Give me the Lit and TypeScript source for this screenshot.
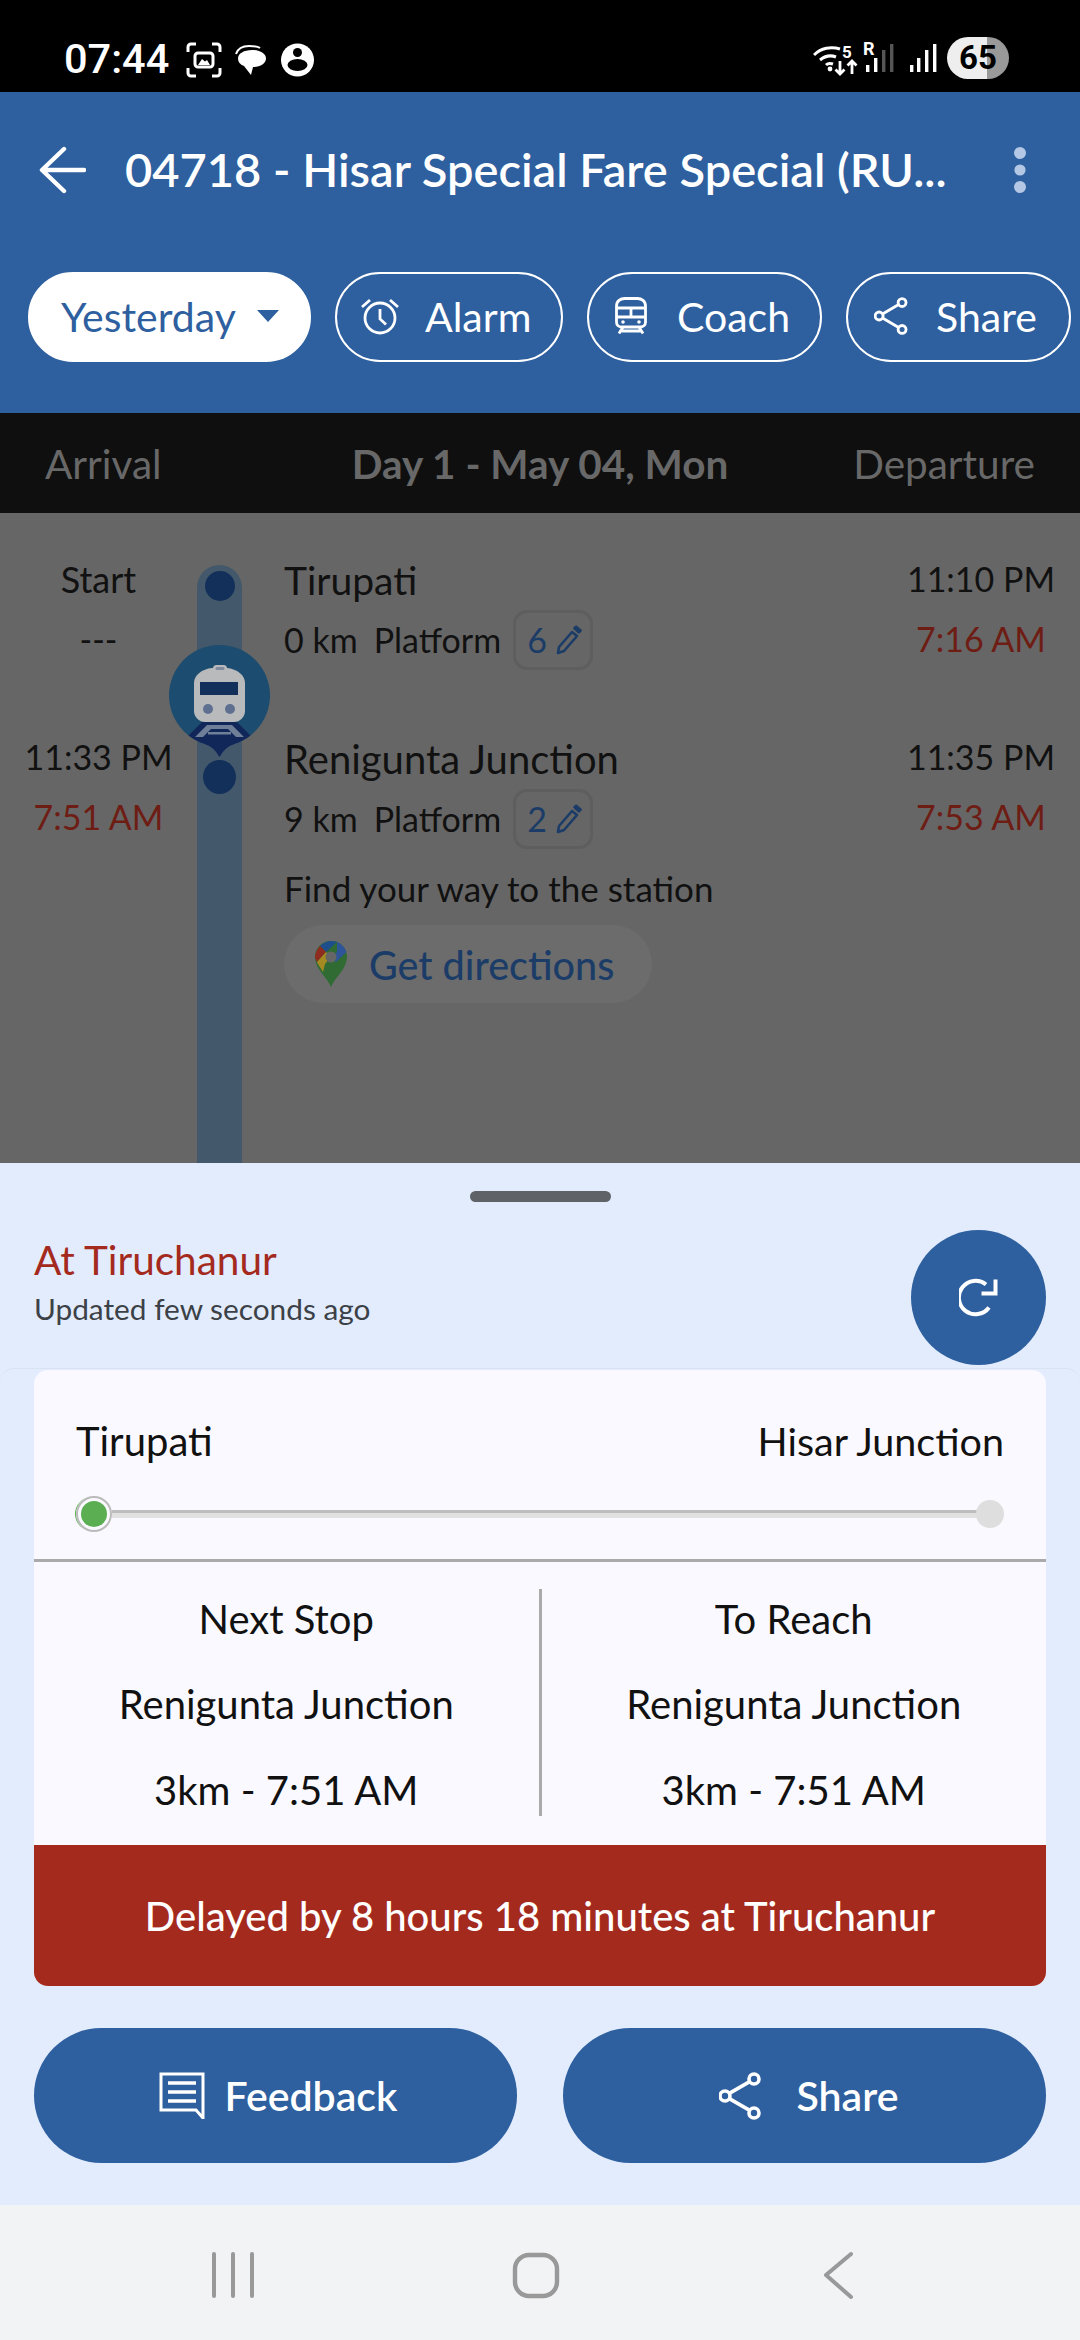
import { LitElement, html, css } from "lit";
import { customElement } from "lit/decorators.js";

const shareIcon = (w: number, h: number) => html`<svg width=${w} height=${h} viewBox="0 0 42 48" fill="none" stroke="currentColor" stroke-width="3.6">
  <circle cx="35" cy="7" r="5"/><circle cx="6" cy="24" r="5"/><circle cx="35" cy="41" r="5"/>
  <path d="M30.7 9.6 10.3 21.4M10.3 26.6l20.4 11.8"/></svg>`;

const pencil = html`<svg class="pen" width="26" height="30" viewBox="0 0 26 30" fill="none" stroke="#1C3C68" stroke-width="2.6" stroke-linejoin="round">
  <path d="M3 22 16 7l5 4L8 26l-6 2z"/><path d="M18.5 3.2l1.6-1.4 4.4 3.8-1.6 1.7z" fill="#1C3C68"/></svg>`;

@customElement("app-root")
export class AppRoot extends LitElement {
  static styles = css`
    :host { display: block; width: 1080px; height: 2340px; overflow: hidden; font-family: "Lato", "Noto Sans", sans-serif; color: #111; }
    * { box-sizing: border-box; }
    .status { height: 92px; background: #000; color: #fff; display: flex; align-items: center; justify-content: space-between; padding: 24px 71px 0 64px; }
    .status-left, .status-right { display: flex; align-items: center; }
    .clock { font: 500 41.5px "Roboto", sans-serif; width: 122px; }
    .status-left svg { margin: 4px 13px 0 0; }
    .batt { width: 62px; height: 42px; border-radius: 21px; background: linear-gradient(90deg, #eee 0 40px, #999 40px); color: #000; font: 700 33px/42px "Roboto", sans-serif; text-align: center; margin-left: 8px; }
    .header { height: 321px; background: #2E5F9F; color: #fff; }
    .toolbar { height: 156px; display: flex; align-items: center; padding-left: 38px; }
    .title { font-size: 47px; font-weight: 600; margin-left: 39px; white-space: nowrap; flex: 0 0 823px; margin-top: -3px; }
    .kebab { margin-left: 65px; }
    .chips { margin-top: 24px; display: flex; padding-left: 28px; }
    .chip { height: 90px; padding-bottom: 2px; border-radius: 45px; border: 2.5px solid #fff; display: flex; align-items: center; font-size: 41px; flex: none; white-space: nowrap; }
    .chip.sel { width: 283px; background: #fff; color: #2E5F9F; padding-left: 31px; margin-right: 24px; }
    .chip.sel svg { margin-left: 21px; }
    .chip.alarm { width: 228px; padding-left: 24px; margin-right: 24px; }
    .chip.alarm svg { margin-right: 26px; }
    .chip.coach { width: 235px; padding-left: 26px; margin-right: 24px; }
    .chip.coach svg { margin-right: 30px; }
    .chip.share { width: 225px; padding-left: 26px; }
    .chip.share svg { margin-right: 28px; }
    .daybar { height: 100px; background: #0F0F0F; color: #686868; display: grid; grid-template-columns: 1fr auto 1fr; align-items: center; padding: 0 45px; font-size: 40.5px; }
    .daybar .day { font-weight: 700; }
    .daybar .dep { text-align: right; }
    .timeline { height: 650px; background: #666; padding-top: 36px; overflow: hidden; font-size: 34px; }
    .row { display: grid; grid-template-columns: 197px 45px 1fr auto; }
    .row.first { height: 178px; }
    .row.second { height: 436px; }
    .times { text-align: center; line-height: 60px; }
    .times .word { font-size: 36px; }
    .times.right { margin-right: 25px; }
    .late { color: #6E1D14; }
    .track { background: #43586A; position: relative; }
    .row.first .track { margin-top: 16px; border-radius: 23px 23px 0 0; padding-top: 6px; }
    .row.second .track { padding-top: 33px; }
    .dot { display: block; margin: 0 auto; border-radius: 50%; background: #12305A; }
    .row.first .dot { width: 30px; height: 30px; }
    .row.second .dot { width: 33px; height: 34px; }
    .marker { position: absolute; left: -28px; top: 80px; z-index: 1; }
    .main { padding: 1px 0 0 42px; }
    .name { font-size: 39px; line-height: 60px; }
    .name.long { font-size: 40px; line-height: 62px; margin-bottom: -1px; }
    .line { display: flex; align-items: center; height: 60px; line-height: 60px; }
    .km { margin-right: 16px; }
    .badge { width: 80px; height: 60px; border: 3px solid #5E5E5E; border-radius: 14px; margin-left: 12px; display: flex; align-items: center; padding-left: 11px; color: #1C3C68; }
    .badge .pen { margin-left: 9px; }
    .find { font-size: 35px; line-height: 60px; margin-top: 9px; }
    .pill { margin-top: 7px; width: 368px; height: 78px; border-radius: 39px; background: #6C6C6C; display: flex; align-items: center; padding-left: 31px; color: #1C3C68; font-size: 39.5px; font-weight: 500; }
    .pill svg { margin-right: 22px; }
    .sheet { height: 1042px; background: #E2ECFD; display: flex; flex-direction: column; }
    .handle { width: 141px; height: 11px; border-radius: 6px; background: #5F6368; margin: 28px auto 0; flex: none; }
    .head { margin-top: 28px; height: 135px; padding: 5px 34px 0; display: flex; align-items: flex-start; justify-content: space-between; flex: none; }
    .at { color: #A52A1E; font-size: 40.5px; line-height: 50px; }
    .upd { color: #3C4147; font-size: 29.8px; line-height: 40px; margin-top: 4px; }
    .refresh { width: 135px; height: 135px; margin-top: -5px; border-radius: 50%; background: #2E5F9F; display: flex; align-items: center; justify-content: center; }
    .wrap { margin-top: 3px; padding: 1px 34px 0; border-top: 1px solid #D9E3F4; border-radius: 14px; flex: none; }
    .card { height: 616px; background: #FAF9FF; border-radius: 14px; overflow: hidden; display: flex; flex-direction: column; font-size: 40px; }
    .ends { display: flex; justify-content: space-between; padding: 46px 42px 0 42px; line-height: 50px; flex: none; }
    .ends .to { font-size: 39.5px; }
    .slider { margin: 29px 42px 0 42px; height: 38px; display: flex; align-items: center; flex: none; }
    .startdot { width: 36px; height: 36px; border-radius: 50%; flex: none; background: #5BAE52; border: 5px solid #FAF9FF; outline: 2px solid #BBB; outline-offset: -2px; box-shadow: -2px 0 0 -1px #5BAE52; }
    .rail { flex: 1; height: 8px; background: #E1E1E1; border-top: 3px solid #BDBDBD; }
    .enddot { width: 28px; height: 28px; border-radius: 50%; background: #DEDEDE; flex: none; margin-left: -2px; }
    .divider { margin-top: 26px; height: 3px; background: #AAA; flex: none; }
    .cols { height: 283px; flex: none; display: grid; grid-template-columns: 1fr 3px 1fr; padding-top: 27px; }
    .col { text-align: center; padding-top: 1.5px; }
    .col div { height: 85.5px; line-height: 56px; white-space: nowrap; }
    .vline { background: #AAA; height: 227px; }
    .delay { height: 141px; flex: none; background: #A52A1E; color: #fff; display: flex; align-items: center; justify-content: center; font-size: 40px; font-weight: 500; white-space: nowrap; }
    .actions { margin-top: 42px; padding: 0 34px; display: grid; grid-template-columns: 1fr 1fr; gap: 46px; flex: none; }
    .btn { height: 135px; border-radius: 68px; background: #2E5F9F; color: #fff; display: flex; align-items: center; justify-content: center; font-size: 41px; font-weight: 600; padding-left: 5px; }
    .btn svg { margin-right: 20px; }
    .btn.s { padding-left: 8px; }
    .btn.s svg { margin-right: 36px; }
    .nav { height: 135px; background: #F2F3F5; display: grid; grid-template-columns: 1fr; }
  `;

  render() {
    return html`
      <div class="status">
        <div class="status-left">
          <span class="clock">07:44</span>
          <svg width="36" height="36" viewBox="0 0 36 36" fill="none" stroke="#fff" stroke-width="3">
            <path d="M2 10V5a3 3 0 0 1 3-3h5M26 2h5a3 3 0 0 1 3 3v5M34 26v5a3 3 0 0 1-3 3h-5M10 34H5a3 3 0 0 1-3-3v-5"/>
            <rect x="9" y="11" width="18" height="14" rx="3"/><path d="M12 23l4-6 3 2.500 2-1.500 3 5z" fill="#fff" stroke="none"/>
          </svg>
          <svg width="33" height="36" viewBox="0 0 33 36" fill="#fff">
            <path d="M17 8c8 0 14 3.500 14 8.500 0 5-6 8.500-13 8.500l-2 8-7-9c-4-1.500-6-4-6-7.500 0-5 6-8.500 14-8.500z"/><path d="M1 12C3 6 8 4 14 4c5 0 9 .5 11 2" stroke="#fff" stroke-width="2" fill="none"/>
          </svg>
          <svg width="33" height="36" viewBox="0 0 33 36">
            <circle cx="16.500" cy="18" r="16.500" fill="#fff"/><circle cx="16.500" cy="10.500" r="4.500" fill="#000"/><ellipse cx="16.500" cy="23" rx="10" ry="6" fill="#000"/>
          </svg>
        </div>
        <div class="status-right">
          <svg width="126" height="44" viewBox="0 -4 126 44" fill="none" stroke="#fff">
            <path d="M1 15C8 8 18 6 27 9M7 20c5-4 11-5 16-3M13 25c2-2 4-2 7-1" stroke-width="3"/>
            <circle cx="17" cy="29" r="2.400" fill="#fff" stroke="none"/>
            <text x="29" y="18" fill="#fff" stroke="none" font-family="Roboto" font-weight="700" font-size="17">5</text>
            <path d="M27 21v13M22.500 29.500l4.500 4.500 4.500-4.500M39 34V21M34.500 25.500l4.500-4.500 4.500 4.500" stroke-width="2.800"/>
            <text x="50" y="15" fill="#fff" stroke="none" font-family="Roboto" font-weight="700" font-size="18">R</text>
            <g stroke="none" fill="#fff"><rect x="53" y="25" width="3.400" height="7"/><rect x="61" y="18" width="3.400" height="14"/></g>
            <g stroke="none" fill="#555"><rect x="69" y="10" width="3.400" height="22"/><rect x="77" y="4" width="3.400" height="28"/></g>
            <g stroke="none" fill="#fff"><rect x="97" y="25" width="3.400" height="7"/><rect x="104" y="18" width="3.400" height="14"/><rect x="112" y="10" width="3.400" height="22"/><rect x="120" y="4" width="3.400" height="28"/></g>
          </svg>
          <div class="batt">65</div>
        </div>
      </div>

      <div class="header">
        <div class="toolbar">
          <svg width="48" height="48" viewBox="0 0 48 48" fill="none" stroke="#fff" stroke-width="4.400" stroke-linecap="round" stroke-linejoin="round"><path d="M26 3 4 24l22 21M5 24h41"/></svg>
          <span class="title">04718 - Hisar Special Fare Special (RU...</span>
          <svg class="kebab" width="14" height="46" viewBox="0 0 14 46" fill="#B4C8E6"><circle cx="7" cy="6" r="6"/><circle cx="7" cy="23" r="5.600"/><circle cx="7" cy="40" r="6"/></svg>
        </div>
        <div class="chips">
          <div class="chip sel">Yesterday<svg width="22" height="12" viewBox="0 0 22 12" fill="#2E5F9F"><path d="M0 0h22L11 12z"/></svg></div>
          <div class="chip alarm">
            <svg width="38" height="38" viewBox="0 0 38 38" fill="none" stroke="#fff" stroke-width="2.800"><circle cx="19" cy="21" r="15"/><path d="M19 12v10l6 5.500M1 10l8-7M37 10l-8-7"/></svg>Alarm
          </div>
          <div class="chip coach">
            <svg width="32" height="38" viewBox="0 0 32 38" fill="none" stroke="#fff" stroke-width="2.800">
              <path d="M1.500 9c0-5 4-7.500 8-7.500h13c4 0 8 2.500 8 7.500v16c0 3-2 5-5 5h-19c-3 0-5-2-5-5z"/>
              <path d="M1.500 11h29M1.500 20h29M16 11v9M8 30l-4 6.500M24 30l4 6.500M6 34h20"/>
              <circle cx="8" cy="25" r="1.800" fill="#fff" stroke="none"/><circle cx="24" cy="25" r="1.800" fill="#fff" stroke="none"/>
            </svg>Coach
          </div>
          <div class="chip share">${shareIcon(34, 38)}Share</div>
        </div>
      </div>

      <div class="daybar"><span>Arrival</span><span class="day">Day 1 - May 04, Mon</span><span class="dep">Departure</span></div>

      <div class="timeline">
        <div class="row first">
          <div class="times"><div class="word">Start</div><div>---</div></div>
          <div class="track">
            <span class="dot"></span>
            <svg class="marker" width="101" height="113" viewBox="0 0 101 113">
              <defs><clipPath id="m"><circle cx="50.500" cy="50.500" r="50.500"/></clipPath></defs>
              <circle cx="50.500" cy="50.500" r="50.500" fill="#1C4C6F"/>
              <g clip-path="url(#m)"><path d="M33 77h35l40 40H-7z" fill="#11275A"/></g>
              <path d="M36 99q9 3 14.500 13q5.500-10 14.500-13z" fill="#11275A"/>
              <path d="M38 80h25l12 12h-8l-8-8H42l-8 8h-8z" fill="#6F7F98"/><rect x="39" y="87" width="23" height="2.500" fill="#6F7F98"/>
              <path d="M25 38c0-8 8-14 18-15h15c10 1 18 7 18 15v28c0 6-5 11-11 11H36c-6 0-11-5-11-11z" fill="#B9BABC"/>
              <rect x="44" y="20" width="14" height="7" rx="3.500" fill="#B9BABC"/>
              <rect x="46.500" y="22" width="9" height="3" rx="1.500" fill="#7F8A9C"/>
              <rect x="31" y="37" width="38" height="13" fill="#12305A"/>
              <circle cx="39" cy="64" r="5" fill="#5F6F90"/><circle cx="61" cy="64" r="5" fill="#5F6F90"/>
            </svg>
          </div>
          <div class="main">
            <div class="name">Tirupati</div>
            <div class="line"><span class="km">0 km</span><span>Platform</span><span class="badge">6${pencil}</span></div>
          </div>
          <div class="times right"><div>11:10 PM</div><div class="late">7:16 AM</div></div>
        </div>
        <div class="row second">
          <div class="times"><div>11:33 PM</div><div class="late">7:51 AM</div></div>
          <div class="track"><span class="dot"></span></div>
          <div class="main">
            <div class="name long">Renigunta Junction</div>
            <div class="line"><span class="km">9 km</span><span>Platform</span><span class="badge">2${pencil}</span></div>
            <div class="find">Find your way to the station</div>
            <div class="pill">
              <svg width="32" height="46" viewBox="0 0 32 46">
                <path d="M16 46C12 36 0 28 0 16 0 7 7 0 16 0s16 7 16 16c0 12-12 20-16 30z" fill="#2F6B33"/>
                <path d="M5 5C8 2 12 0 16 0c2 0 4 .4 6 1L11 11z" fill="#1E4F8C"/>
                <path d="M22 1c5 2 8 6 9.500 10L21 21l-5-5 6-5z" fill="#2E5597"/>
                <path d="M5 5l6 6-9 10C1 19 0 17 0 16c0-4 2-8 5-11z" fill="#8E2C22"/>
                <path d="M11 11l5 5-6 7-2 8C6 27 3 24 2 21z" fill="#A58A22"/>
                <circle cx="16" cy="16" r="5.500" fill="#666"/>
              </svg>
              Get directions
            </div>
          </div>
          <div class="times right"><div>11:35 PM</div><div class="late">7:53 AM</div></div>
        </div>
      </div>

      <div class="sheet">
        <div class="handle"></div>
        <div class="head">
          <div><div class="at">At Tiruchanur</div><div class="upd">Updated few seconds ago</div></div>
          <div class="refresh">
            <svg width="40" height="40" viewBox="0 0 40 40" fill="none" stroke="#fff" stroke-width="4"><path d="M30 29.500A16.700 16.700 0 1 1 27 6.500"/><path d="M22.500 15.500H36.500V1.500"/></svg>
          </div>
        </div>
        <div class="wrap">
          <div class="card">
            <div class="ends"><span>Tirupati</span><span class="to">Hisar Junction</span></div>
            <div class="slider"><span class="startdot"></span><span class="rail"></span><span class="enddot"></span></div>
            <div class="divider"></div>
            <div class="cols">
              <div class="col"><div>Next Stop</div><div>Renigunta Junction</div><div>3km - 7:51 AM</div></div>
              <div class="vline"></div>
              <div class="col"><div>To Reach</div><div>Renigunta Junction</div><div>3km - 7:51 AM</div></div>
            </div>
            <div class="delay">Delayed by 8 hours 18 minutes at Tiruchanur</div>
          </div>
        </div>
        <div class="actions">
          <div class="btn">
            <svg width="46" height="47" viewBox="0 0 46 47" fill="none" stroke="#fff" stroke-width="3"><path d="M2 2h42v44l-7-8H2z"/><path d="M9 11h28M9 20h28M9 29h28" stroke-width="3.400"/></svg>Feedback
          </div>
          <div class="btn s">${shareIcon(42, 48)}Share</div>
        </div>
      </div>

      <div class="nav">
        <svg width="1080" height="135" viewBox="0 0 1080 135" fill="none" stroke="#999">
          <path d="M214 49v42M233 49v42M252 49v42" stroke-width="4" stroke-linecap="round"/>
          <rect x="515" y="50" width="42" height="41" rx="14" stroke-width="4.400"/>
          <path d="M851 49 826 70l25 22" stroke-width="4" stroke-linecap="round" stroke-linejoin="round"/>
        </svg>
      </div>
    `;
  }
}
